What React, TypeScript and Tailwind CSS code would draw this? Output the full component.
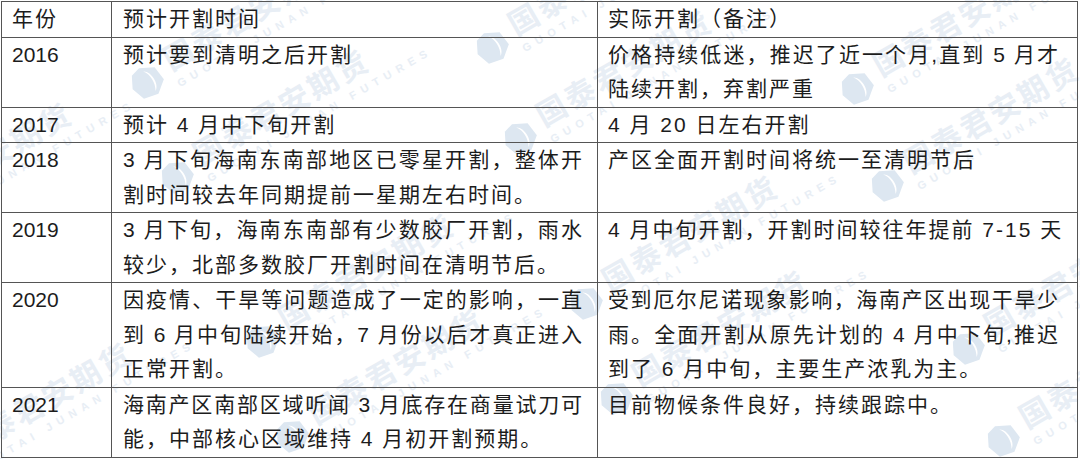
import React from 'react'

type Row = { year: string; plan: string[]; real: string[] }

const rows: Row[] = [
  { year: '2016', plan: ['预计要到清明之后开割'], real: ['价格持续低迷，推迟了近一个月,直到 5 月才', '陆续开割，弃割严重'] },
  { year: '2017', plan: ['预计 4 月中下旬开割'], real: ['4 月 20 日左右开割'] },
  { year: '2018', plan: ['3 月下旬海南东南部地区已零星开割，整体开', '割时间较去年同期提前一星期左右时间。'], real: ['产区全面开割时间将统一至清明节后'] },
  { year: '2019', plan: ['3 月下旬，海南东南部有少数胶厂开割，雨水', '较少，北部多数胶厂开割时间在清明节后。'], real: ['4 月中旬开割，开割时间较往年提前 7-15 天'] },
  {
    year: '2020',
    plan: ['因疫情、干旱等问题造成了一定的影响，一直', '到 6 月中旬陆续开始，7 月份以后才真正进入', '正常开割。'],
    real: ['受到厄尔尼诺现象影响，海南产区出现干旱少', '雨。全面开割从原先计划的 4 月中下旬,推迟', '到了 6 月中旬，主要生产浓乳为主。'],
  },
  { year: '2021', plan: ['海南产区南部区域听闻 3 月底存在商量试刀可', '能，中部核心区域维持 4 月初开割预期。'], real: ['目前物候条件良好，持续跟踪中。'] },
]

// logo centre of each faint watermark
const marks = [
  [147, 82], [177, 177], [492, 47], [520, 138], [857, 88], [887, 185],
  [262, 341], [292, 436], [586, 303], [616, 398], [968, 348], [1003, 440],
  [-120, 230], [-60, 470],
]

function Logo() {
  return (
    <svg width="36" height="36" viewBox="0 0 36 36" className="shrink-0">
      <path d="M18 2 L32 9 L34 24 L22 34 L7 31 L2 17 L8 5 Z" fill="#dde7f1" strokeLinejoin="round" />
      <path d="M20 7 C27 10 28 26 21 30 C25 23 25 13 20 7 Z" fill="#ffffff" />
    </svg>
  )
}

function Mark({ x, y }: { x: number; y: number }) {
  return (
    <div
      className="absolute flex w-max items-center gap-2 h-[36px] whitespace-nowrap origin-[18px_18px] -rotate-30"
      style={{ left: x - 18, top: y - 18 }}
    >
      <Logo />
      <div className="flex flex-col leading-none text-[#e8eef5]">
        <span className="text-[30px] font-bold tracking-[3px]">国泰君安期货</span>
        <span className="mt-1 text-[11px] font-bold tracking-[6px]">GUOTAI JUNAN FUTURES</span>
      </div>
    </div>
  )
}

function Lines({ lines }: { lines: string[] }) {
  return (
    <>
      {lines.map((t, i) =>
        i < lines.length - 1 ? (
          <div key={i} className="tracking-[1px] text-justify [text-align-last:justify]">{t}</div>
        ) : (
          <div key={i} className="whitespace-nowrap tracking-[2px]">{t}</div>
        )
      )}
    </>
  )
}

export default function App() {
  const cell = 'border-r border-b border-[#555] leading-[34.5px]'
  return (
    <div className="relative w-[1080px] h-[459px] overflow-hidden bg-white font-['Liberation_Sans','Noto_Sans_CJK_SC',sans-serif] text-[21px] text-[#1c1c1c]">
      <div className="absolute inset-0 pointer-events-none">
        {marks.map(([x, y], i) => (
          <Mark key={i} x={x} y={y} />
        ))}
      </div>

      <div className="relative ml-px mt-px grid w-fit grid-cols-[110px_486px_480px] border-l border-t border-[#555]">
        <div className={`${cell} pl-[10px] tracking-[2px]`}>年份</div>
        <div className={`${cell} pl-[11px] tracking-[2px]`}>预计开割时间</div>
        <div className={`${cell} pl-[10px] tracking-[2px]`}>实际开割（备注）</div>

        {rows.map(r => (
          <React.Fragment key={r.year}>
            <div className={`${cell} pl-[10px]`}>{r.year}</div>
            <div className={`${cell} pl-[11px] pr-[14px]`}>
              <Lines lines={r.plan} />
            </div>
            <div className={`${cell} pl-[10px] pr-[18px]`}>
              <Lines lines={r.real} />
            </div>
          </React.Fragment>
        ))}
      </div>
    </div>
  )
}
